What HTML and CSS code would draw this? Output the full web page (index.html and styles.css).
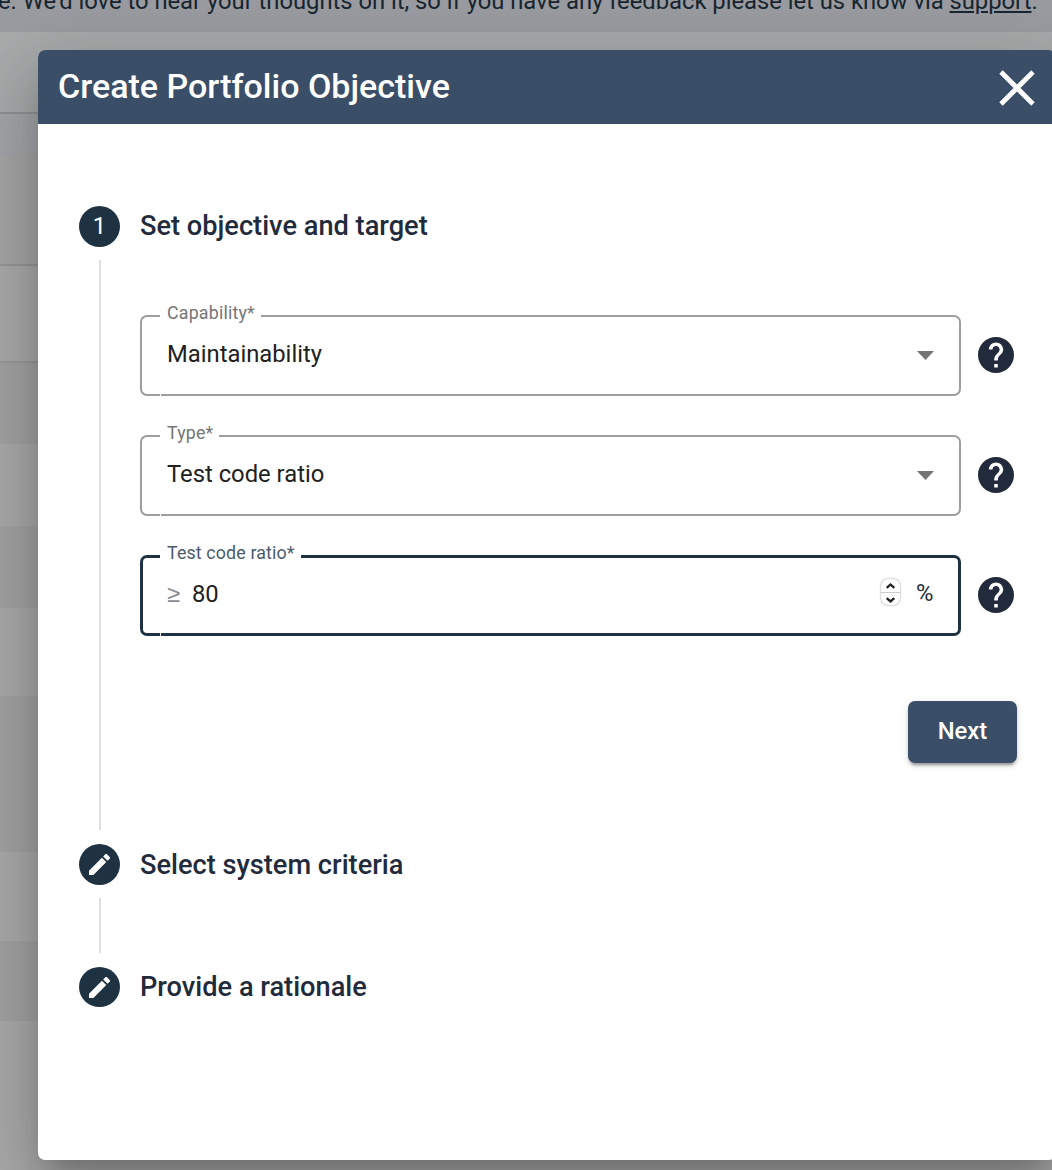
FILE: index.html
```
<!DOCTYPE html>
<html lang="en">
<head>
<meta charset="utf-8">
<title>Create Portfolio Objective</title>
<link rel="stylesheet" href="styles.css">
</head>
<body>
<div class="page">
  <div class="banner"><p class="banner-text">e. We’d love to hear your thoughts on it, so if you have any feedback please let us know via <a class="banner-link">support</a>.</p></div>
  <div class="row row-toolbar"></div>
  <div class="row row-tabs"></div>
  <div class="row row-filter"></div>
  <div class="row row-head"></div>
  <div class="row row-a"></div>
  <div class="row row-b"></div>
  <div class="row row-c"></div>
  <div class="row row-d"></div>
  <div class="row row-e"></div>
  <div class="row row-f"></div>
  <div class="row row-g"></div>
  <div class="row row-rest"></div>
</div>
<div class="dialog" role="dialog">
  <header class="dialog-header">
    <h1 class="dialog-title">Create Portfolio Objective</h1>
    <svg class="close" viewBox="0 0 36 36"><path d="M2 2 34 34M34 2 2 34"/></svg>
  </header>
  <main class="stepper">
    <section class="step step-open">
      <div class="step-header"><span class="badge">1</span><h2 class="step-title">Set objective and target</h2></div>
      <div class="step-body">
        <div class="step-line"></div>
        <div class="form">
          <div class="form-row">
            <div class="field">
              <div class="outline"><span class="lead"></span><span class="notch"><label class="label">Capability*</label></span><span class="trail"></span></div>
              <span class="value">Maintainability</span>
              <svg class="arrow" viewBox="0 0 17 9"><path d="M0 0h17L8.5 9z"/></svg>
            </div>
            <svg class="help" viewBox="2 2 20 20"><path d="M12 2C6.480 2 2 6.480 2 12s4.480 10 10 10 10-4.480 10-10S17.520 2 12 2zm1 17h-2v-2h2v2zm2.070-7.750l-.9.920C13.450 12.900 13 13.500 13 15h-2v-.5c0-1.100.45-2.100 1.170-2.830l1.240-1.260c.37-.36.59-.86.59-1.410 0-1.100-.9-2-2-2s-2 .9-2 2H8c0-2.210 1.790-4 4-4s4 1.790 4 4c0 .88-.36 1.680-.93 2.250z"/></svg>
          </div>
          <div class="form-row">
            <div class="field">
              <div class="outline"><span class="lead"></span><span class="notch"><label class="label">Type*</label></span><span class="trail"></span></div>
              <span class="value">Test code ratio</span>
              <svg class="arrow" viewBox="0 0 17 9"><path d="M0 0h17L8.5 9z"/></svg>
            </div>
            <svg class="help" viewBox="2 2 20 20"><path d="M12 2C6.480 2 2 6.480 2 12s4.480 10 10 10 10-4.480 10-10S17.520 2 12 2zm1 17h-2v-2h2v2zm2.070-7.750l-.9.920C13.450 12.900 13 13.500 13 15h-2v-.5c0-1.100.45-2.100 1.170-2.830l1.240-1.260c.37-.36.59-.86.59-1.410 0-1.100-.9-2-2-2s-2 .9-2 2H8c0-2.210 1.790-4 4-4s4 1.790 4 4c0 .88-.36 1.680-.93 2.250z"/></svg>
          </div>
          <div class="form-row">
            <div class="field focused">
              <div class="outline"><span class="lead"></span><span class="notch"><label class="label">Test code ratio*</label></span><span class="trail"></span></div>
              <span class="prefix">≥</span><span class="value">80</span>
              <span class="spinner">
                <svg class="spin up" viewBox="0 0 20 13"><path d="M6 9.200 10 5.700 14 9.200"/></svg>
                <svg class="spin down" viewBox="0 0 20 13"><path d="M6 5.300 10 8.800 14 5.300"/></svg>
              </span>
              <span class="suffix">%</span>
            </div>
            <svg class="help" viewBox="2 2 20 20"><path d="M12 2C6.480 2 2 6.480 2 12s4.480 10 10 10 10-4.480 10-10S17.520 2 12 2zm1 17h-2v-2h2v2zm2.070-7.750l-.9.920C13.450 12.900 13 13.500 13 15h-2v-.5c0-1.100.45-2.100 1.170-2.830l1.240-1.260c.37-.36.59-.86.59-1.410 0-1.100-.9-2-2-2s-2 .9-2 2H8c0-2.210 1.790-4 4-4s4 1.790 4 4c0 .88-.36 1.680-.93 2.250z"/></svg>
          </div>
          <button class="next" type="button">Next</button>
        </div>
      </div>
    </section>
    <section class="step step-closed">
      <div class="step-header"><span class="badge"><svg class="pencil" viewBox="3 3 18 18"><path d="M3 17.250V21h3.750L17.810 9.940l-3.750-3.750L3 17.250zM20.710 7.040c.39-.39.39-1.020 0-1.410l-2.340-2.340c-.39-.39-1.020-.39-1.410 0l-1.830 1.830 3.750 3.750 1.830-1.830z"/></svg></span><h2 class="step-title">Select system criteria</h2></div>
      <div class="step-line"></div>
    </section>
    <section class="step step-last">
      <div class="step-header"><span class="badge"><svg class="pencil" viewBox="3 3 18 18"><path d="M3 17.250V21h3.750L17.810 9.940l-3.750-3.750L3 17.250zM20.710 7.040c.39-.39.39-1.020 0-1.410l-2.340-2.340c-.39-.39-1.020-.39-1.410 0l-1.830 1.830 3.750 3.750 1.830-1.830z"/></svg></span><h2 class="step-title">Provide a rationale</h2></div>
    </section>
  </main>
</div>
</body>
</html>
```
FILE: styles.css
```
* { box-sizing: border-box; }

body {
  margin: 0;
  height: 1170px;
  overflow: hidden;
  position: relative;
  font-family: Roboto, "Liberation Sans", sans-serif;
  color: #222b3b;
}

.page {
  display: flex;
  flex-direction: column;
  height: 1170px;
  background: #ababab;
}

.banner {
  height: 32px;
  flex: none;
  background: #9b9ca1;
  overflow: hidden;
}
.banner-text {
  margin: -13px 0 0 -2px;
  font-size: 23.8px;
  line-height: 28px;
  white-space: nowrap;
  letter-spacing: -0.02px;
  color: #172630;
}
.banner-link {
  text-decoration: underline;
  text-decoration-thickness: 2px;
  text-underline-offset: 2px;
}

.row { flex: none; }
.row-toolbar { height: 82px; background: #a9aaab; border-bottom: 2px solid #929292; }
.row-tabs { height: 40px; background: #a4a7aa; border-bottom: 1px solid #9fa3a9; }
.row-filter { height: 112px; background: #a6a6a6; border-bottom: 2px solid #979797; }
.row-head { height: 97px; border-bottom: 2px solid #999999; }
.row-a { height: 81px; background: #a4a4a4; }
.row-b { height: 82px; }
.row-c { height: 82px; background: #a4a4a4; }
.row-d { height: 88px; }
.row-e { height: 156px; background: #a4a4a4; }
.row-f { height: 89px; }
.row-g { height: 80px; background: #a4a4a4; }
.row-rest { flex: 1; }

.dialog {
  position: absolute;
  left: 38px;
  top: 50px;
  width: 1018px;
  height: 1110px;
  border-radius: 7px;
  background: #fff;
  box-shadow: 0 19px 26px -12px rgba(0, 0, 0, .2), 0 41px 65px 5px rgba(0, 0, 0, .14), 0 15px 78px 14px rgba(0, 0, 0, .12);
}
.dialog-header {
  display: flex;
  justify-content: space-between;
  align-items: center;
  height: 74px;
  padding: 0 21.500px 0 20px;
  border-radius: 7px 7px 0 0;
  background: #3b4e67;
  color: #fff;
}
.dialog-title {
  margin: 0;
  padding-bottom: 2px;
  font-size: 34px;
  font-weight: 500;
  line-height: 40px;
  letter-spacing: 0.01px;
}
.close {
  width: 36px;
  height: 36px;
  margin-top: 1px;
  fill: none;
  stroke: #fff;
  stroke-width: 4.8;
}

.stepper { padding: 82px 39px 0 41px; }
.step-header {
  display: flex;
  align-items: center;
  gap: 20px;
  height: 41px;
}
.badge {
  display: flex;
  align-items: center;
  justify-content: center;
  width: 41px;
  height: 41px;
  padding-bottom: 2px;
  border-radius: 50%;
  background: #1f3241;
  color: #fff;
  font-size: 23.8px;
  line-height: 38px;
}
.pencil { width: 21px; height: 21px; margin: 2px 1px 0 0; fill: #fff; }
.step-title {
  margin: 0;
  font-size: 27.2px;
  font-weight: 500;
  line-height: 32px;
}
.step-open .step-title, .step-last .step-title { padding-bottom: 2px; }
.step-body { display: flex; height: 570px; margin: 13px 0 14px; }
.step-line { flex: none; width: 2px; margin-left: 20px; background: #e0e0e0; }
.step-closed .step-line { height: 55px; margin-top: 13px; margin-bottom: 14px; }
.step-last .badge { height: 40px; margin-bottom: 1px; }

.form {
  flex: 1;
  display: flex;
  flex-direction: column;
  padding: 55px 0 0 39px;
}
.form-row { display: flex; align-items: center; gap: 16.500px; margin-bottom: 39px; }
.field {
  position: relative;
  display: flex;
  align-items: center;
  width: 821px;
  height: 81px;
  padding: 0 27.500px 3px 27px;
  font-size: 23.8px;
  line-height: 28px;
}
.outline {
  --line: 2px solid #9e9e9e;
  position: absolute;
  inset: 0;
  display: flex;
}
.focused .outline { --line: 3px solid #1f3241; }
.lead {
  width: 20px;
  border: var(--line);
  border-right: 0;
  border-radius: 7px 0 0 7px;
}
.notch {
  margin-left: 1px;
  padding: 0 6px;
  border-bottom: var(--line);
}
.trail {
  flex: 1;
  border: var(--line);
  border-left: 0;
  border-radius: 0 7px 7px 0;
}
.label {
  display: block;
  margin-top: -13px;
  font-size: 17.800px;
  line-height: 22px;
  letter-spacing: 0.2px;
  color: #757575;
}
.focused .label { color: #4b5b6c; letter-spacing: 0.15px; }
.value { flex: 1; color: #212121; }
.arrow { width: 17px; height: 9px; margin-top: 3px; fill: #757575; }
.help { width: 36px; height: 36px; margin-bottom: 1px; fill: #222b3b; }
.prefix { width: 25px; color: #858a93; font-family: "Liberation Sans", sans-serif; }
.suffix { padding-bottom: 2px; color: #222b3b; }
.spinner {
  display: flex;
  flex-direction: column;
  width: 19px;
  height: 26px;
  margin: 0 16px 4px 0;
  border-radius: 7px;
  background: #fff;
  box-shadow: 0 0 2px rgba(0, 0, 0, .5);
}
.spin { width: 19px; height: 13px; fill: none; stroke: #222; stroke-width: 2.4; }
.spin.up { border-bottom: 1px solid #ccc; height: 14px; }

.next {
  align-self: flex-end;
  width: 109px;
  height: 62px;
  margin-top: 26px;
  padding: 0 0 3px;
  border: 0;
  border-radius: 7px;
  background: #3b4e67;
  box-shadow: 0 5px 2px -3px rgba(0, 0, 0, .2), 0 3px 3px rgba(0, 0, 0, .14), 0 2px 8px rgba(0, 0, 0, .12);
  color: #fff;
  font: 500 23.8px/28px Roboto, "Liberation Sans", sans-serif;
}
```
